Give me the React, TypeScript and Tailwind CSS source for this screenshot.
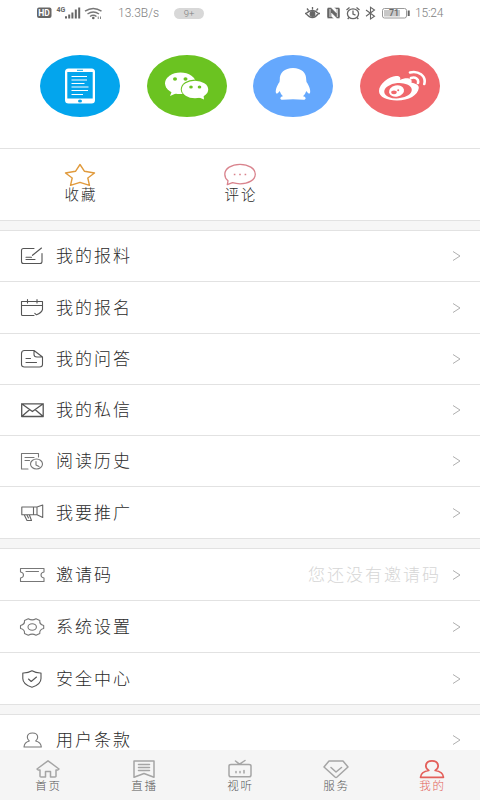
import type { ReactNode } from "react";

type Row = {
  label: string;
  icon: ReactNode;
  height: string;
  hint?: string;
};

type Tab = {
  label: string;
  icon: ReactNode;
  active?: boolean;
};

const Glyph = ({ children }: { children: ReactNode }) => (
  <svg
    width="26"
    height="22"
    viewBox="0 0 26 22"
    fill="none"
    stroke="#555555"
    strokeWidth="1.1"
    strokeLinecap="round"
    strokeLinejoin="round"
  >
    {children}
  </svg>
);

const TabGlyph = ({ children }: { children: ReactNode }) => (
  <svg
    width="26"
    height="20"
    viewBox="0 0 26 20"
    fill="none"
    stroke="currentColor"
    strokeWidth="1.5"
    strokeLinecap="round"
    strokeLinejoin="round"
  >
    {children}
  </svg>
);

const mineRows: Row[] = [
  {
    label: "我的报料",
    height: "h-[51px]",
    icon: (
      <Glyph>
        <path d="M15 3.5H4.5Q2.5 3.5 2.5 5.5V16.5Q2.5 18.5 4.5 18.5H21Q23 18.5 23 16.5V8.5M13.5 10.3L22.5 3M7 12.2H12.5M7 14.5H16" />
      </Glyph>
    ),
  },
  {
    label: "我的报名",
    height: "h-[52px]",
    icon: (
      <Glyph>
        <path d="M15 18.5H3.5Q2.5 18.5 2.5 17.5V4.5H23.5V12.5Q22.5 15.8 17.5 17.8L15.8 16.3M2.5 8.5H23.5M8.5 2.5V6M18 2.5V6" />
      </Glyph>
    ),
  },
  {
    label: "我的问答",
    height: "h-[51px]",
    icon: (
      <Glyph>
        <path d="M15 2.5H5.5Q2.5 2.5 2.5 5.5V16.5Q2.5 19 5.5 19H20.5Q23.5 19 23.5 16.5V9L15 2.5V6.5Q15 9 18 9H23.5M7 10.5H11.5M7 14.5H17.5" />
      </Glyph>
    ),
  },
  {
    label: "我的私信",
    height: "h-[51px]",
    icon: (
      <Glyph>
        <path
          d="M2.7 4.8H24.2V17.5H2.7ZM2.7 4.8L13.4 12.5L24.2 4.8M2.7 17.5L10.5 10.8M24.2 17.5L16.3 10.8"
          strokeWidth="1.3"
        />
      </Glyph>
    ),
  },
  {
    label: "阅读历史",
    height: "h-[51px]",
    icon: (
      <Glyph>
        <path
          d="M9 19H2.5V3.5H19.5V7M6 7.5H15M6 10.5H10.5M17 11.5V15L20 16.5"
          stroke="#777777"
        />
        <ellipse cx="17.5" cy="14" rx="6" ry="5" stroke="#777777" />
      </Glyph>
    ),
  },
  {
    label: "我要推广",
    height: "h-[52px]",
    icon: (
      <Glyph>
        <path
          d="M2.8 5H14.5V12.8H2.8ZM14.5 5H18V12.8H14.5M18 5L23.7 3V15.5L18 12.8M5.2 12.8L8 18.5H12.5L10.3 12.8M7.8 12.8L9.5 16"
          stroke="#666666"
        />
      </Glyph>
    ),
  },
];

const settingRows: Row[] = [
  {
    label: "邀请码",
    height: "h-[52px]",
    hint: "您还没有邀请码",
    icon: (
      <Glyph>
        <path
          d="M1.5 4.5H25V8Q22 8.5 22 11Q22 13.5 25 14V17.5H1.5V14Q4.5 13.5 4.5 11Q4.5 8.5 1.5 8ZM7 7.5H19.5"
          stroke="#777777"
        />
      </Glyph>
    ),
  },
  {
    label: "系统设置",
    height: "h-[52px]",
    icon: (
      <Glyph>
        <path
          d="M9.3 2.8Q13.2 5 17 2.8L20.8 4.5Q20.3 8.5 24.7 9.5V12.5Q20.3 13.5 20.8 17.5L17 19.2Q13.2 17 9.3 19.2L5.5 17.5Q6 13.5 1.5 12.5V9.5Q6 8.5 5.5 4.5Z"
          stroke="#777777"
        />
        <ellipse cx="13.2" cy="11" rx="4.2" ry="3.3" stroke="#777777" />
      </Glyph>
    ),
  },
  {
    label: "安全中心",
    height: "h-[52px]",
    icon: (
      <Glyph>
        <path d="M13 2.8Q9 5.2 3.8 5V10.5Q3.8 16.5 13 19.2Q22 16.5 22 10.5V5Q17 5.2 13 2.8ZM9.5 11L12.2 13.5L17.5 9" />
      </Glyph>
    ),
  },
];

const termRows: Row[] = [
  {
    label: "用户条款",
    height: "h-[51px]",
    icon: (
      <Glyph>
        <path
          d="M10.3 12Q8.3 10.5 8.3 8Q8.6 4 13.5 4Q18.4 4 18.7 8Q18.7 10.5 16.7 12Q22 13.3 22.3 18H5Q5.3 13.3 10.3 12Z"
          stroke="#777777"
        />
      </Glyph>
    ),
  },
];

const tabs: Tab[] = [
  {
    label: "首页",
    icon: (
      <TabGlyph>
        <path d="M13 1.8L2 10L3.2 11H5V17.3Q5 18 6 18H10.5V12.5H15.5V18H20Q21 18 21 17.3V11H22.8L24 10Z" />
      </TabGlyph>
    ),
  },
  {
    label: "直播",
    icon: (
      <TabGlyph>
        <path d="M3 2H23V18.3L13 14.5L3 18.3ZM7.5 5.5H18.5M7.5 8.5H18.5M7.5 11.5H18.5" />
      </TabGlyph>
    ),
  },
  {
    label: "视听",
    icon: (
      <TabGlyph>
        <path d="M4 5.5H22Q24 5.5 24 7V16Q24 17.8 22 17.8H4Q2 17.8 2 16V7Q2 5.5 4 5.5ZM8.5 2L12.5 5.2L18 1.5M9 12.5V13.8M13 12.5V13.8M17 11.5V14" />
      </TabGlyph>
    ),
  },
  {
    label: "服务",
    icon: (
      <TabGlyph>
        <path d="M6 2H20L25 8L14 18Q13 18.8 12 18L1 8ZM8 8.5L13 13L18.5 8.5" />
      </TabGlyph>
    ),
  },
  {
    label: "我的",
    active: true,
    icon: (
      <TabGlyph>
        <path
          d="M9.8 11.5Q6.8 9.5 6.8 6.8Q7.3 1.8 13 1.8Q18.7 1.8 19.2 6.8Q19.2 9.5 16.2 11.5Q24 12.5 24.5 18.3H1.5Q2 12.5 9.8 11.5Z"
          strokeWidth="1.7"
        />
      </TabGlyph>
    ),
  },
];

const StatusBar = () => (
  <div className="flex h-[26px] shrink-0 items-center pl-[37px] pr-9 text-[12px] text-[#808080]">
    <svg width="66" height="18" viewBox="0 0 66 18" fill="#666666">
      <rect x="0" y="3.5" width="14.5" height="10.5" rx="2" />
      <text x="1.3" y="12" fontSize="8.5" fontWeight="bold" fill="#ffffff">HD</text>
      <text x="19.5" y="8.3" fontSize="7" fontWeight="bold">4G</text>
      <path d="M28 12.2h2V14.5h-2zM31.2 10.5h2v4h-2zM34.4 8.5h2v6h-2zM37.8 5.5h2v9h-2zM41.2 3.5h2v11h-2z" />
      <g fill="none" stroke="#777777" strokeWidth="1.4">
        <path d="M48 7.2Q56.3 1.8 64.5 7.2M50.5 10Q56.3 6 62 10M53 12.5Q56.3 10 59.5 12.5" />
      </g>
      <circle cx="56.3" cy="14" r="1.3" />
      <path d="M60.8 12.5h.8V15h-.8zM63 12.5h.8V15h-.8z" />
    </svg>
    <span className="ml-[15px] w-[42px] whitespace-nowrap">13.3B/s</span>
    <span className="ml-[14px] flex h-[11px] w-[30px] items-center justify-center rounded-full bg-[#d8d8d8] text-[9.5px] leading-[11px]">
      9+
    </span>
    <svg
      className="ml-auto"
      width="106"
      height="18"
      viewBox="0 0 106 18"
      fill="none"
      stroke="#666666"
      strokeWidth="1.3"
    >
      <path d="M1 9.5H2.5Q9 3.5 15 9.5H16.5M2.5 9.5Q9 17.5 15 9.5M9 3V5.5M3.5 4.5L5 6.5M14.5 4.5L13 6.5" transform="translate(-1.5 0)" />
      <circle cx="7.5" cy="10" r="2.3" fill="#666666" />
      <path d="M23.5 3.5H26L31.5 9V5.5L29 3.5H33.5Q35 3.5 35 5V13Q35 14.5 33.5 14.5H32L26.5 9V12.5L29 14.5H23.5Q22 14.5 22 13V5Q22 3.5 23.5 3.5Z" fill="#666666" stroke="#ffffff" strokeWidth="0.4" />
      <path d="M25 5V13M32.3 5V13" stroke="#ffffff" strokeWidth="0.8" />
      <ellipse cx="48" cy="9.7" rx="5.6" ry="4.9" />
      <path d="M48 6.5V10L50.5 11.2M41.5 6L44.5 3.5M54.5 6L51.5 3.5M44 13.5L42.7 15M52 13.5L53.3 15" />
      <path d="M61 6L69.5 12.2L65.5 15V3.2L69.5 6L61 12.2" strokeWidth="1.1" />
      <rect x="77.5" y="4.5" width="24" height="9.5" rx="2" stroke="#999999" strokeWidth="1" />
      <rect x="79" y="6" width="16" height="6.5" fill="#c8c8c8" stroke="none" />
      <path d="M103.7 6.5V12" strokeWidth="2" />
      <text x="84" y="12.4" fontSize="9" fontWeight="500" fill="#666666" stroke="none">71</text>
    </svg>
    <span className="ml-[4px] w-[29px] whitespace-nowrap tracking-[-0.2px]">15:24</span>
  </div>
);

const MenuRow = ({ label, icon, height, hint }: Row) => (
  <div className={`flex shrink-0 items-center border-b border-[#e2e2e2] bg-white pl-[19px] pr-[19px] ${height}`}>
    {icon}
    <span className="ml-[11px] pb-[2px] text-[17px] leading-6 tracking-[2px] text-[#2b2b2b]">{label}</span>
    <span className="ml-auto pb-[2px] text-[17px] leading-6 tracking-[2px] text-[#d6d6d6]">{hint}</span>
    <svg className="ml-[11px]" width="9" height="12" viewBox="0 0 9 12" fill="none" stroke="#b0b0b0">
      <path d="M1 1.5L8 6L1 10.5" />
    </svg>
  </div>
);

const Gap = ({ height }: { height: string }) => (
  <div className={`shrink-0 border-b border-[#e2e2e2] bg-[#f6f6f6] ${height}`} />
);

const App = () => {
  return (
    <div className="flex h-[800px] w-[480px] flex-col overflow-hidden bg-white font-['Noto_Sans_CJK_SC',sans-serif] font-light">
      <div className="font-['Roboto',sans-serif]">
        <StatusBar />
      </div>

      <div className="flex h-[123px] shrink-0 gap-[26.7px] border-b border-[#e2e2e2] pl-10 pt-[29px]">
        <div className="flex h-[62px] w-20 items-center justify-center rounded-[50%] bg-[#03a5ed]">
          <svg width="30" height="36" viewBox="0 0 30 36">
            <rect x="0" y="0.5" width="30" height="35" rx="3.5" fill="#ffffff" />
            <rect x="2.3" y="4" width="25.4" height="26.5" fill="#03a5ed" />
            <path d="M12 2.3H18" stroke="#03a5ed" />
            <ellipse cx="15" cy="33" rx="2" ry="1.6" fill="#03a5ed" />
            <path
              d="M6.5 8.5H22M6.5 12H22M6.5 15.5H19.5M6.5 19H23.5M6.5 22.5H23M6.5 26.5H18"
              stroke="#ffffff"
            />
          </svg>
        </div>
        <div className="flex h-[62px] w-20 items-center justify-center rounded-[50%] bg-[#6bc321]">
          <svg width="44" height="30" viewBox="0 0 44 30" fill="#ffffff">
            <ellipse cx="15.5" cy="12.3" rx="15.5" ry="10.8" />
            <path d="M7 20L5 25L12 22Z" />
            <ellipse cx="30" cy="18.2" rx="14.2" ry="9.7" fill="#6bc321" />
            <ellipse cx="30" cy="18.5" rx="13.2" ry="8.8" />
            <path d="M33 26L39 28.5L38.5 24Z" />
            <g fill="#6bc321">
              <ellipse cx="10" cy="8" rx="2" ry="1.7" />
              <ellipse cx="20.5" cy="8" rx="2" ry="1.7" />
              <ellipse cx="26" cy="16" rx="1.8" ry="1.5" />
              <ellipse cx="34.5" cy="16" rx="1.8" ry="1.5" />
            </g>
          </svg>
        </div>
        <div className="flex h-[62px] w-20 items-center justify-center rounded-[50%] bg-[#65a8fd]">
          <svg className="-mt-1" width="36" height="34" viewBox="0 0 36 34" fill="#ffffff">
            <path d="M18 1C9.5 1 4.5 6 4.8 12.5L4.5 15C1.5 19 .2 24 1 26C1.5 27.5 3.5 26 4.7 24Q5.5 27 8 29.3C4.5 30 4.5 32.8 7.5 32.8Q18 31.8 28.5 32.8C31.5 32.8 31.5 30 28 29.3Q30.5 27 31.3 24C32.5 26 34.5 27.5 35 26C35.8 24 34.5 19 31.5 15L31.2 12.5C31.5 6 26.5 1 18 1Z" />
          </svg>
        </div>
        <div className="flex h-[62px] w-20 items-center justify-center rounded-[50%] bg-[#f0686c]">
          <svg className="ml-[5px]" width="48" height="32" viewBox="0 0 48 32">
            <path
              d="M0 21C0 14 10 6.5 17 6C21 5.8 22 8 21 10C26 7.5 34 7.5 32.5 12.7C37 13.5 40 15 39.8 18C39 25 30 30.5 18 30.5C8 30.5 0 27 0 21Z"
              fill="#ffffff"
            />
            <ellipse cx="19" cy="20.7" rx="13.8" ry="7.7" fill="#f0686c" transform="rotate(-5 19 20.7)" />
            <ellipse cx="17.5" cy="21" rx="7.6" ry="5.6" fill="#ffffff" transform="rotate(-12 17.5 21)" />
            <ellipse cx="15" cy="22.3" rx="2.8" ry="1.9" fill="#f0686c" />
            <circle cx="19.2" cy="20.3" r="1" fill="#f0686c" />
            <path
              d="M31 2.5C39 .5 47.5 5.5 45.3 14M32 8C36.5 6.5 40 9.3 39 13"
              fill="none"
              stroke="#ffffff"
              strokeWidth="2.6"
              strokeLinecap="round"
            />
          </svg>
        </div>
      </div>

      <div className="flex h-[72px] shrink-0 border-b border-[#e2e2e2] pt-[14px] text-[14.5px] leading-5 tracking-[2px] text-[#2b2b2b]">
        <div className="flex w-40 flex-col items-center">
          <svg width="32" height="24" viewBox="0 0 32 24" fill="none" stroke="#e09a3c" strokeWidth="1.4" strokeLinejoin="round">
            <path d="M16 1.5L20.5 8.3L30.5 10L23.8 15L25.5 22.3L16 19.3L6.5 22.3L8.2 15L1.5 10L11.5 8.3Z" />
          </svg>
          <span className="-mt-[3px] pl-[2px]">收藏</span>
        </div>
        <div className="flex w-40 flex-col items-center">
          <svg width="34" height="24" viewBox="0 0 34 24" fill="none" stroke="#d9838d" strokeWidth="1.3" strokeLinejoin="round">
            <path d="M5 17.8C2.8 16 1.8 14 1.8 11.2C1.8 5.5 8.5 1.3 17 1.3S32.3 5.5 32.3 11.2S25.5 20.8 17 20.8C14 20.8 11.5 20.3 9.5 19.7L4.3 21.7Z" />
            <path d="M10.8 11.5h1.6M16.2 11.5h1.6M21.6 11.5h1.6" strokeWidth="1.6" />
          </svg>
          <span className="-mt-[3px] pl-[2px]">评论</span>
        </div>
      </div>

      <Gap height="h-[10px]" />
      {mineRows.map((row) => (
        <MenuRow key={row.label} {...row} />
      ))}
      <Gap height="h-[10px]" />
      {settingRows.map((row) => (
        <MenuRow key={row.label} {...row} />
      ))}
      <Gap height="h-[10px]" />
      <div className="h-[35px] shrink-0">
        {termRows.map((row) => (
          <MenuRow key={row.label} {...row} />
        ))}
      </div>

      <div className="relative flex h-[50px] shrink-0 bg-[#f5f5f5] pt-[9px]">
        {tabs.map((tab) => (
          <div
            key={tab.label}
            className={`flex flex-1 flex-col items-center ${tab.active ? "text-[#e35f5a]" : "text-[#a5a5a5]"}`}
          >
            {tab.icon}
            <span
              className={`-mt-[2px] pl-[1px] text-[11.5px] leading-4 tracking-[1.7px] ${tab.active ? "text-[#e35f5a]" : "text-[#555555]"}`}
            >
              {tab.label}
            </span>
          </div>
        ))}
      </div>
    </div>
  );
};

export default App;
